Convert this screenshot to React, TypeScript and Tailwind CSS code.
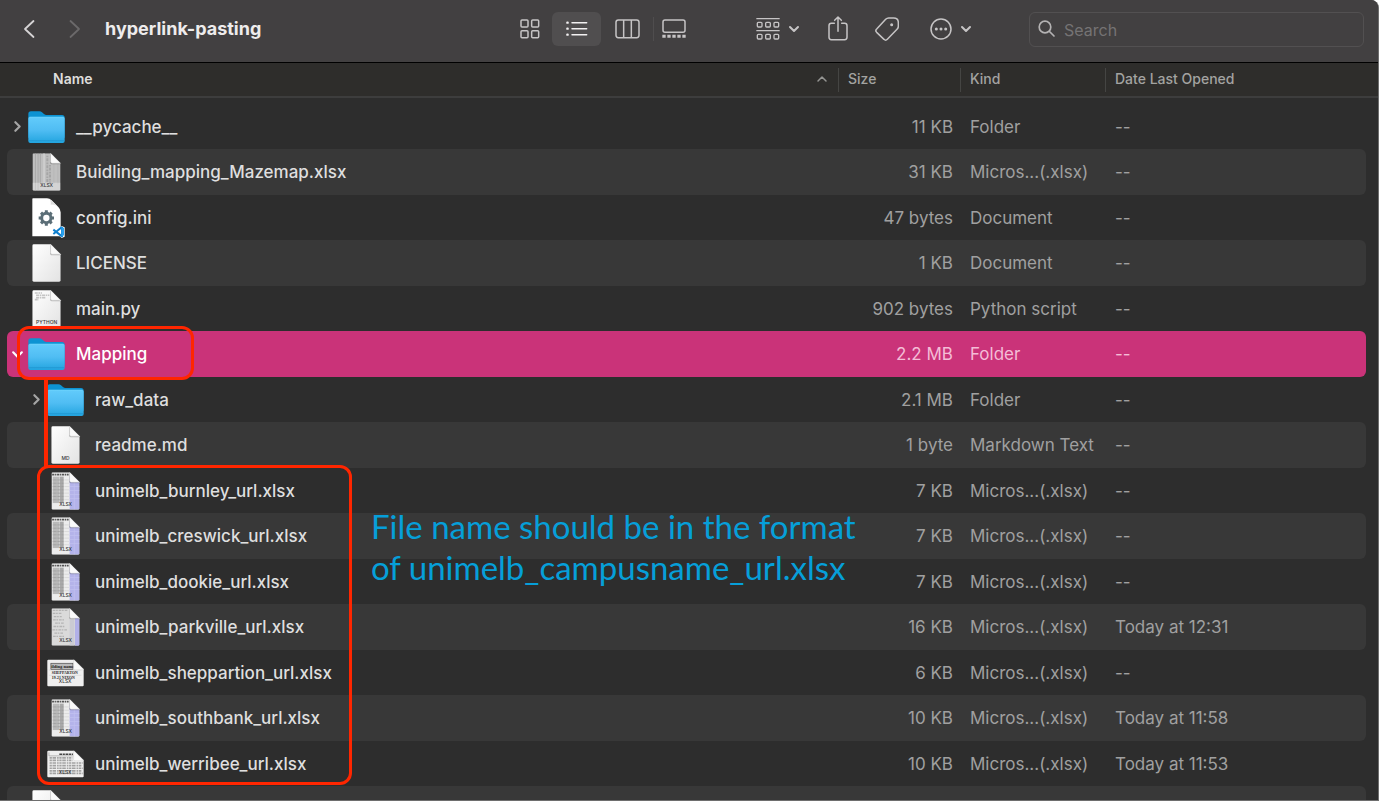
import React from "react";

type IconKind =
  | "folder"
  | "sheetGray"
  | "config"
  | "blank"
  | "python"
  | "markdown"
  | "sheet"
  | "sheetLight"
  | "wideNames"
  | "wideRows";

interface FileRow {
  name: string;
  icon: IconKind;
  size: string;
  kind: string;
  opened: string;
  child?: boolean;
  disclosure?: "closed" | "open";
  selected?: boolean;
}

const XLSX = "Micros...(.xlsx)";

const files: FileRow[] = [
  { name: "__pycache__", icon: "folder", size: "11 KB", kind: "Folder", opened: "--", disclosure: "closed" },
  { name: "Buidling_mapping_Mazemap.xlsx", icon: "sheetGray", size: "31 KB", kind: XLSX, opened: "--" },
  { name: "config.ini", icon: "config", size: "47 bytes", kind: "Document", opened: "--" },
  { name: "LICENSE", icon: "blank", size: "1 KB", kind: "Document", opened: "--" },
  { name: "main.py", icon: "python", size: "902 bytes", kind: "Python script", opened: "--" },
  { name: "Mapping", icon: "folder", size: "2.2 MB", kind: "Folder", opened: "--", disclosure: "open", selected: true },
  { name: "raw_data", icon: "folder", size: "2.1 MB", kind: "Folder", opened: "--", disclosure: "closed", child: true },
  { name: "readme.md", icon: "markdown", size: "1 byte", kind: "Markdown Text", opened: "--", child: true },
  { name: "unimelb_burnley_url.xlsx", icon: "sheet", size: "7 KB", kind: XLSX, opened: "--", child: true },
  { name: "unimelb_creswick_url.xlsx", icon: "sheet", size: "7 KB", kind: XLSX, opened: "--", child: true },
  { name: "unimelb_dookie_url.xlsx", icon: "sheet", size: "7 KB", kind: XLSX, opened: "--", child: true },
  { name: "unimelb_parkville_url.xlsx", icon: "sheetLight", size: "16 KB", kind: XLSX, opened: "Today at 12:31", child: true },
  { name: "unimelb_sheppartion_url.xlsx", icon: "wideNames", size: "6 KB", kind: XLSX, opened: "--", child: true },
  { name: "unimelb_southbank_url.xlsx", icon: "sheet", size: "10 KB", kind: XLSX, opened: "Today at 11:58", child: true },
  { name: "unimelb_werribee_url.xlsx", icon: "wideRows", size: "10 KB", kind: XLSX, opened: "Today at 11:53", child: true },
  { name: "", icon: "blank", size: "", kind: "", opened: "" },
];

function Folder() {
  return (
    <svg width="37" height="34" viewBox="0 0 111 102" aria-hidden="true">
      <defs>
        <linearGradient id="folder-front" x1="0" y1="0" x2="0" y2="1">
          <stop offset="0" stopColor="#62cbfb" />
          <stop offset="0.5" stopColor="#50bdf3" />
          <stop offset="1" stopColor="#22a4df" />
        </linearGradient>
      </defs>
      <path d="M1 12q0-8 8-8h25q5 0 8 3l6 5q3 3 8 3h46q8 0 8 8v60H1z" fill="#0d93d3" />
      <path d="M1 27q0-6 6-6h97q6 0 6 6v66q0 6-6 6H7q-6 0-6-6z" fill="url(#folder-front)" />
      <path d="M2 25q1-4 5-4h97q4 0 5 4" fill="none" stroke="#7fdcff" strokeWidth="1.5" />
      <path d="M2 92h107" stroke="#1c93cb" strokeWidth="2" />
    </svg>
  );
}

function PageFold() {
  return (
    <>
      <path d="M66 2l32 32H71q-5 0-5-5z" fill="#00000038" />
      <path d="M68 1l30 30H73q-5 0-5-5z" fill="#fafafa" stroke="#c9c9c9" strokeWidth="1" />
    </>
  );
}

const PAGE = "M17 1h51l30 30v79q0 4-4 4H17q-4 0-4-4V5q0-4 4-4z";

function Tag({ children, x = 56, y = 103 }: { children: string; x?: number; y?: number }) {
  return (
    <text x={x} y={y} textAnchor="middle" fontSize="15" fontWeight="500" fill="#333" className="font-['Inter',sans-serif]">
      {children}
    </text>
  );
}

function Sheet({ variant }: { variant: "sheet" | "sheetGray" | "sheetLight" }) {
  const clip = "page-" + variant;
  return (
    <svg width="37" height="38" viewBox="0 0 111 115" aria-hidden="true">
      <defs>
        <clipPath id={clip}>
          <path d={PAGE} />
        </clipPath>
      </defs>
      <g clipPath={"url(#" + clip + ")"}>
        {variant === "sheet" && (
          <>
            <rect width="111" height="115" fill="#ececec" />
            <rect x="17" y="14" width="20" height="80" fill="#b9b9b9" />
            <rect x="38" y="14" width="12" height="80" fill="#a9a9a9" />
            <rect x="68" y="16" width="31" height="98" fill="#b4b3ea" />
            <path d="M15 8h50" stroke="#555" strokeWidth="5" strokeDasharray="7 2 4 2" />
            <path d="M17 24h33M17 34h33M17 44h33M17 54h33M17 64h33M17 74h33M17 84h33" stroke="#979797" strokeWidth="3" strokeDasharray="2 2" />
            <path d="M52 24h14M52 34h14M52 44h14M52 54h14M52 64h14M52 74h14M52 84h14" stroke="#d2d2d2" strokeWidth="2" />
            <path d="M68 44h31M68 56h31M68 68h31M68 80h31M82 20v94" stroke="#c3c2f0" strokeWidth="2" />
          </>
        )}
        {variant === "sheetGray" && (
          <>
            <rect width="111" height="115" fill="#bfbfbf" />
            <path d="M22 0v115M30 0v115M37 0v94" stroke="#9c9c9c" strokeWidth="2" />
            <rect x="46" y="0" width="4" height="92" fill="#d3d3d3" />
            <path d="M58 8v84M66 36v56" stroke="#a6a6a6" strokeWidth="6" strokeDasharray="5 3 9 4" />
            <path d="M78 34v60M90 34v60" stroke="#b3b3b3" strokeWidth="2" />
            <rect y="90" width="111" height="25" fill="#ffffff55" />
          </>
        )}
        {variant === "sheetLight" && (
          <>
            <rect width="111" height="115" fill="#dadada" />
            <path d="M17 7h46M17 16h28M20 26h24M18 36h34M24 46h26M19 56h36M16 66h44M22 76h26M18 86h34" stroke="#b4b4b4" strokeWidth="4" strokeDasharray="8 2 5 3" />
            <rect x="68" y="34" width="14" height="80" fill="#cbcbd3" />
            <rect x="84" y="30" width="15" height="86" fill="#b1b0e8" />
          </>
        )}
      </g>
      <PageFold />
      <Tag>XLSX</Tag>
    </svg>
  );
}

function PlainPage({ label, code }: { label?: string; code?: boolean }) {
  return (
    <svg width="37" height="38" viewBox="0 0 111 115" aria-hidden="true">
      <defs>
        <linearGradient id="paper" x1="0" y1="0" x2="1" y2="1">
          <stop offset="0" stopColor="#ffffff" />
          <stop offset="1" stopColor="#e3e3e3" />
        </linearGradient>
      </defs>
      <path d={PAGE} fill="url(#paper)" />
      {code && <path d="M20 9h22M24 16h40M24 23h30M20 29h12" stroke="#c4c4c4" strokeWidth="5" strokeDasharray="9 2 5 2" />}
      <PageFold />
      {label && <Tag>{label}</Tag>}
    </svg>
  );
}

function ConfigPage() {
  return (
    <svg width="37" height="40" viewBox="0 0 111 120" aria-hidden="true">
      <path d="M15 1h42q8 0 14 6l20 20q7 7 7 16v72H13V3q0-2 2-2z" fill="#fff" />
      <path d="M62 2q8 4 6 18q16-2 26 12q-4-8-32-30z" fill="#dcdcdc" />
      <g stroke="#5b6e77" fill="none">
        <circle cx="55" cy="60" r="14" strokeWidth="9" />
        <path
          d="M55 37v8M55 75v8M32 60h8M70 60h8M39 44l6 6M65 70l6 6M71 44l-6 6M45 70l-6 6"
          strokeWidth="9"
        />
      </g>
      <path d="M76 93l9 6l16-15l9 4v28l-9 4l-16-14l-9 6l-5-4v-11z" fill="#fff" />
      <path d="M102 87v28L76 95M102 87L76 108" fill="none" stroke="#0f7fce" strokeWidth="6" strokeLinejoin="round" />
      <path d="M100 86l8 4v22l-8 4z" fill="#27a0ee" />
    </svg>
  );
}

function WidePage({ names }: { names: boolean }) {
  return (
    <svg width="38" height="28" viewBox="0 0 114 84" aria-hidden="true">
      <path d="M4 1h80l29 29v50q0 3-3 3H4q-3 0-3-3V4q0-3 3-3z" fill="#efefef" />
      {names ? (
        <>
          <rect x="12" y="12" width="68" height="19" fill="#bbb" stroke="#444" strokeWidth="2" />
          <g fill="#222" fontWeight="700" className="font-['Liberation_Serif',serif]">
            <text x="13" y="27" fontSize="14">ilding name</text>
            <text x="15" y="45" fontSize="12">SHEPPARTON</text>
            <text x="15" y="62" fontSize="12">19-21 NIXON</text>
          </g>
          <path d="M6 33h100M6 49h100" stroke="#bbb" strokeWidth="1" />
        </>
      ) : (
        <>
          <path d="M38 12h42" stroke="#444" strokeWidth="5" strokeDasharray="9 2 6 2" />
          <path d="M6 6v11h76" stroke="#999" strokeWidth="2" fill="none" />
          <path
            d="M8 23h70M8 31h70M8 39h102M8 47h100M8 55h102M8 63h100M8 71h102"
            stroke="#a2a2a2"
            strokeWidth="5"
            strokeDasharray="7 2 11 3 5 2"
          />
        </>
      )}
      <path d="M82 1l31 31H86q-4 0-4-4z" fill="#fafafa" stroke="#bdbdbd" strokeWidth="1" />
      <Tag y={73}>XLSX</Tag>
    </svg>
  );
}

function FileIcon({ kind }: { kind: IconKind }) {
  switch (kind) {
    case "folder":
      return <Folder />;
    case "config":
      return <ConfigPage />;
    case "blank":
      return <PlainPage />;
    case "python":
      return <PlainPage label="PYTHON" code />;
    case "markdown":
      return <PlainPage label="MD" />;
    case "wideNames":
      return <WidePage names />;
    case "wideRows":
      return <WidePage names={false} />;
    default:
      return <Sheet variant={kind} />;
  }
}

function Chevron({ direction, size = 12, weight = 2 }: { direction: "down" | "right" | "up"; size?: number; weight?: number }) {
  const paths = { down: "M2 4l4 4l4-4", right: "M4 2l4 4l-4 4", up: "M2 8l4-4l4 4" };
  return (
    <svg width={size} height={size} viewBox="0 0 12 12" fill="none" stroke="currentColor" strokeWidth={weight} strokeLinecap="round" strokeLinejoin="round" aria-hidden="true">
      <path d={paths[direction]} />
    </svg>
  );
}

function Toolbar() {
  return (
    <header className="flex h-[63px] shrink-0 items-center border-b border-black bg-[#424041] pr-[14px] pb-1 text-[#c6c4c5]">
      <div className="flex w-[508px] shrink-0 items-center">
        <button type="button" aria-label="Back" className="ml-[14px] flex h-8 w-[30px] items-center justify-center">
          <svg width="12" height="20" viewBox="0 0 12 20" fill="none" stroke="#d6d4d5" strokeWidth="1.8" strokeLinecap="round" strokeLinejoin="round">
            <path d="M10.500 2L2 10l8.500 8" />
          </svg>
        </button>
        <button type="button" aria-label="Forward" className="ml-4 flex h-8 w-[30px] items-center justify-center">
          <svg width="12" height="20" viewBox="0 0 12 20" fill="none" stroke="#6b696a" strokeWidth="1.8" strokeLinecap="round" strokeLinejoin="round">
            <path d="M1.500 2L10 10l-8.500 8" />
          </svg>
        </button>
        <h1 className="ml-[15px] text-lg font-bold text-[#eeecec]">hyperlink-pasting</h1>
      </div>

      <button type="button" aria-label="Icon view" className="flex h-[34px] w-11 items-center justify-center">
        <svg width="20" height="20" viewBox="0 0 60 60" fill="none" stroke="currentColor" strokeWidth="4.500">
          <rect x="3" y="3" width="21" height="21" rx="3" />
          <rect x="35" y="3" width="21" height="21" rx="3" />
          <rect x="3" y="35" width="21" height="21" rx="3" />
          <rect x="35" y="35" width="21" height="21" rx="3" />
        </svg>
      </button>
      <button type="button" aria-label="List view" aria-pressed="true" className="flex h-[34px] w-[49px] items-center justify-center rounded-md bg-[#504e4f] text-[#f2f0f1]">
        <svg width="22" height="16" viewBox="0 0 66 48" fill="none" stroke="currentColor" strokeWidth="4.500" strokeLinecap="round">
          <path d="M18 5h44M18 23h44M18 41h44" />
          <path d="M4 5h1M4 23h1M4 41h1" strokeWidth="7" />
        </svg>
      </button>
      <button type="button" aria-label="Column view" className="flex h-[34px] w-[52px] items-center justify-center">
        <svg width="25" height="20" viewBox="0 0 75 60" fill="none" stroke="currentColor" strokeWidth="4.500">
          <rect x="3" y="3" width="69" height="53" rx="7" />
          <path d="M26 3v53M49 3v53" />
        </svg>
      </button>
      <div className="h-6 w-px bg-[#4f4d4e]" />
      <button type="button" aria-label="Gallery view" className="flex h-[34px] w-10 items-center justify-center">
        <svg width="24" height="20" viewBox="0 0 72 60" fill="none" stroke="currentColor" strokeWidth="4.500">
          <rect x="3" y="3" width="66" height="37" rx="6" />
          <path d="M1 52h70" strokeWidth="9" strokeDasharray="10 5" />
        </svg>
      </button>

      <button type="button" aria-label="Group items" className="ml-[54px] flex h-[34px] items-center gap-2 px-2">
        <svg width="24" height="24" viewBox="0 0 72 72" fill="none" stroke="currentColor" strokeWidth="4">
          <path d="M1 5h70M1 41h70" strokeWidth="3.500" />
          <rect x="4" y="16" width="14" height="14" rx="3" />
          <rect x="29" y="16" width="14" height="14" rx="3" />
          <rect x="54" y="16" width="14" height="14" rx="3" />
          <rect x="4" y="52" width="14" height="14" rx="3" />
          <rect x="29" y="52" width="14" height="14" rx="3" />
          <rect x="54" y="52" width="14" height="14" rx="3" />
        </svg>
        <Chevron direction="down" />
      </button>
      <button type="button" aria-label="Share" className="flex h-[34px] w-[60px] items-center justify-center">
        <svg width="20" height="26" viewBox="0 0 60 78" fill="none" stroke="currentColor" strokeWidth="4.500" strokeLinecap="round" strokeLinejoin="round">
          <path d="M19 22H10q-7 0-7 7v35q0 7 7 7h40q7 0 7-7V29q0-7-7-7h-9" />
          <path d="M30 46V4M20 13L30 3l10 10" />
        </svg>
      </button>
      <button type="button" aria-label="Edit tags" className="flex h-[34px] w-[38px] items-center justify-center">
        <svg width="24" height="24" viewBox="0 0 72 72" fill="none" stroke="currentColor" strokeWidth="4.500" strokeLinejoin="round">
          <path d="M41 3h15q14 0 14 14v11q0 5-4 9L37 67q-5 5-10 0L5 46q-5-5 0-10L32 7q4-4 9-4z" />
          <circle cx="50" cy="23" r="4.500" fill="currentColor" stroke="none" />
        </svg>
      </button>
      <button type="button" aria-label="More actions" className="ml-4 flex h-[34px] items-center gap-2 px-2">
        <svg width="22" height="22" viewBox="0 0 66 66" fill="none" stroke="currentColor" strokeWidth="4.500">
          <circle cx="33" cy="33" r="30" />
          <g fill="currentColor" stroke="none">
            <circle cx="19" cy="33" r="4.500" />
            <circle cx="33" cy="33" r="4.500" />
            <circle cx="47" cy="33" r="4.500" />
          </g>
        </svg>
        <Chevron direction="down" />
      </button>

      <label className="ml-[49px] flex h-[35px] min-w-0 flex-1 items-center gap-2 rounded-md border border-[#525051] px-2">
        <svg width="18" height="18" viewBox="0 0 18 18" fill="none" stroke="#b4b2b3" strokeWidth="1.700" strokeLinecap="round" aria-hidden="true">
          <circle cx="7" cy="7" r="5.800" />
          <path d="M11.500 11.500l4.500 4.500" />
        </svg>
        <input type="search" aria-label="Search" placeholder="Search" className="min-w-0 flex-1 bg-transparent pt-[2px] text-base text-[#dddddd] outline-none placeholder:text-[#757374]" />
      </label>
    </header>
  );
}

function HeaderCell({ children }: { children: string }) {
  return (
    <th scope="col" className="border-b-2 border-[#3d3d3d] p-0 text-left font-medium text-[#a3a3a1]">
      <div className="flex h-6 items-center border-l border-[#454543] pb-[2px] pl-[9px]">{children}</div>
    </th>
  );
}

function Row({ file, index }: { file: FileRow; index: number }) {
  const striped = index % 2 === 1;
  const fill = (file.selected ? "bg-[#ca3379] " : striped ? "bg-[#383838] " : "") + (striped ? "h-[46px] " : "h-[45px] ");
  const detail = file.selected ? "text-[#f4bdd6] pt-[2px] " : "text-[#a0a0a0] pt-[2px] ";
  return (
    <tr className="text-[17px]">
      <td className="p-0 pl-[7px]">
        <div className={fill + "flex items-center rounded-l-md " + (file.child ? "pl-[19px] " : "") + (file.selected ? "text-white" : "text-[#dfdfdf]")}>
          <span className="flex w-[21px] shrink-0 justify-center">
            {file.disclosure && (
              <button type="button" aria-label={"Toggle " + file.name} className={file.selected ? "text-white" : "text-[#a5a5a5]"}>
                <Chevron direction={file.disclosure === "open" ? "down" : "right"} size={13} />
              </button>
            )}
          </span>
          <span className="flex w-[37px] shrink-0 justify-center">
            <FileIcon kind={file.icon} />
          </span>
          <span className="ml-[11px] pt-[2px] font-medium whitespace-nowrap">{file.name}</span>
        </div>
      </td>
      <td className="p-0">
        <div className={fill + detail + "flex items-center justify-end pr-[7px] whitespace-nowrap"}>{file.size}</div>
      </td>
      <td className="p-0">
        <div className={fill + detail + "flex items-center pl-[10px] whitespace-nowrap"}>{file.kind}</div>
      </td>
      <td className="p-0 pr-3">
        <div className={fill + detail + "flex items-center rounded-r-md pl-[10px] whitespace-nowrap"}>{file.opened}</div>
      </td>
    </tr>
  );
}

function Annotations() {
  return (
    <div className="pointer-events-none absolute inset-0">
      <div className="absolute top-[379px] left-[44px] h-[88px] w-1 bg-[#ff2600]" />
      <div className="absolute top-[326px] left-[17px] h-[54px] w-[177px] rounded-xl border-3 border-[#ff2600]" />
      <div className="absolute top-[465px] left-[37px] h-[320px] w-[315px] rounded-xl border-3 border-[#ff2600]" />
      <p className="absolute top-[506px] left-[371px] font-['Lato',sans-serif] text-[33px] leading-[41px] whitespace-nowrap text-[#069fd9]">
        File name should be in the format
        <br />
        of unimelb_campusname_url.xlsx
      </p>
    </div>
  );
}

export default function App() {
  return (
    <div className="h-screen overflow-hidden bg-white pr-[5px] pb-[2px] font-['Inter',sans-serif]">
      <div className="relative flex h-full flex-col overflow-hidden rounded-tr-lg border-r border-b border-[#6e6e6e] bg-[#2d2d2d]">
        <Toolbar />
        <main className="min-h-0 flex-1 overflow-hidden">
          <table className="w-full table-fixed border-separate border-spacing-0">
            <colgroup>
              <col />
              <col className="w-[122px]" />
              <col className="w-[145px]" />
              <col className="w-[273px]" />
            </colgroup>
            <thead>
              <tr className="h-[35px] bg-[#2e2d2b] text-sm">
                <th scope="col" aria-sort="ascending" className="border-b-2 border-[#3d3d3d] p-0 text-left font-semibold text-[#dededc]">
                  <div className="flex h-6 items-center justify-between pr-[10px] pb-[2px] pl-[53px]">
                    Name
                    <span className="text-[#959593]">
                      <Chevron direction="up" weight={1.5} />
                    </span>
                  </div>
                </th>
                <HeaderCell>Size</HeaderCell>
                <HeaderCell>Kind</HeaderCell>
                <HeaderCell>Date Last Opened</HeaderCell>
              </tr>
            </thead>
            <tbody>
              <tr aria-hidden="true">
                <td colSpan={4} className="h-[6px] p-0" />
              </tr>
              {files.map((file, index) => (
                <Row key={index} file={file} index={index} />
              ))}
            </tbody>
          </table>
        </main>
        <Annotations />
      </div>
    </div>
  );
}
